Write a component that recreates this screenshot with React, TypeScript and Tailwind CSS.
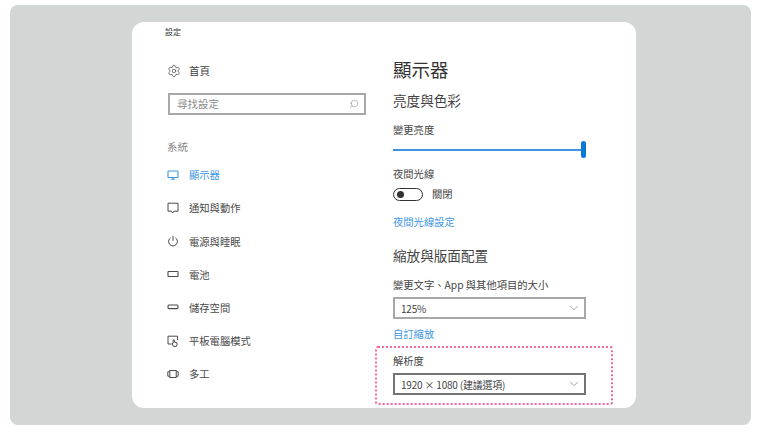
import React from 'react'
import { Settings, Search, ChevronDown } from 'lucide-react'

const FONT = "font-['Noto_Sans_CJK_TC','Noto_Sans',sans-serif]"

function MonitorIcon() {
  return (
    <svg width="12" height="12" viewBox="0 0 12 12" fill="none" stroke="currentColor" strokeWidth="1.1">
      <rect x="1" y="2" width="10" height="6.5" rx="0.6" />
      <path d="M4 10.2h4M6 8.5v1.7" />
    </svg>
  )
}

function NoteIcon() {
  return (
    <svg width="12" height="12" viewBox="0 0 12 12" fill="none" stroke="currentColor" strokeWidth="1">
      <path d="M1 1.2h10v8H7L5.6 11 4.4 9.2H1z" />
    </svg>
  )
}

function PowerIcon() {
  return (
    <svg width="12" height="12" viewBox="0 0 12 12" fill="none" stroke="currentColor" strokeWidth="1">
      <path d="M6 .8v5M3.6 2.8a4.4 4.4 0 1 0 4.8 0" />
    </svg>
  )
}

function BatteryIcon() {
  return (
    <svg width="12" height="12" viewBox="0 0 12 12" fill="none" stroke="currentColor" strokeWidth="1.1">
      <rect x="1" y="3.5" width="10" height="5" rx="0.5" />
    </svg>
  )
}

function StorageIcon() {
  return (
    <svg width="12" height="12" viewBox="0 0 12 12" fill="none" stroke="currentColor" strokeWidth="1.1">
      <rect x="1" y="4" width="10" height="3.6" rx="1" />
    </svg>
  )
}

function TabletIcon() {
  return (
    <svg width="12" height="12" viewBox="0 0 12 12" fill="none" stroke="currentColor" strokeWidth="1">
      <path d="M4.5 9H1V1.2h9.6v4" />
      <path d="M6.4 11.4 5 8.6l1.2-.4V5.4a.7.7 0 0 1 1.4 0v1.8l2.4.6v2l-.6 1.6z" />
    </svg>
  )
}

function MultitaskIcon() {
  return (
    <svg width="12" height="12" viewBox="0 0 12 12" fill="none" stroke="currentColor" strokeWidth="1">
      <rect x="2.8" y="2.5" width="6.4" height="7" />
      <path d="M2.8 3.8H.8v4.4h2M9.2 3.8h2v4.4h-2" />
    </svg>
  )
}

const NAV = [
  { label: '顯示器', icon: <MonitorIcon />, active: true },
  { label: '通知與動作', icon: <NoteIcon /> },
  { label: '電源與睡眠', icon: <PowerIcon /> },
  { label: '電池', icon: <BatteryIcon /> },
  { label: '儲存空間', icon: <StorageIcon /> },
  { label: '平板電腦模式', icon: <TabletIcon /> },
  { label: '多工', icon: <MultitaskIcon /> },
]

function Dropdown({ value, dark }: { value: string; dark?: boolean }) {
  return (
    <div
      className={`mt-[4px] w-[193px] h-[22px] flex items-center justify-between pl-[6px] pr-[3px] border-2 ${
        dark ? 'border-[#757575]' : 'border-[#a8a8a8]'
      }`}
    >
      <span className="text-[10px] tracking-[-0.2px] text-[#444]">{value}</span>
      <ChevronDown size={14} strokeWidth={1} className="text-[#666]" />
    </div>
  )
}

export default function App() {
  return (
    <div className={`w-[760px] h-[432px] bg-white pt-[5px] pl-[10px] ${FONT}`}>
      <div className="w-[741px] h-[420px] bg-[#d2d6d4] rounded-[8px] pt-[17px] pl-[122px]">
        <div className="w-[504px] h-[386px] bg-white rounded-[12px] flex pl-[36px]">
          {/* Left nav */}
          <div className="w-[198px] flex flex-col">
            <div className="h-[20px] flex items-center -ml-[3px] text-[8px] text-[#333]">設定</div>
            <div className="mt-[17px] h-[24px] flex items-center -ml-[1px] text-[#444]">
              <Settings size={14} strokeWidth={1.2} />
              <span className="ml-[8px] text-[10.5px] text-[#444]">首頁</span>
            </div>
            <div className="mt-[10px] h-[22px] border-2 border-[#a8a8a8] flex items-center justify-between pl-[7px] pr-[5px]">
              <span className="text-[10.5px] text-[#8a8a8a]">尋找設定</span>
              <Search size={10} strokeWidth={1} className="text-[#666] -scale-x-100" />
            </div>
            <div className="mt-[24px] h-[16px] flex items-center -ml-[1px] text-[10.5px] text-[#888]">系統</div>
            <div className="mt-[3.5px] flex flex-col">
              {NAV.map((item) => (
                <div
                  key={item.label}
                  className={`h-[33.1px] flex items-center -ml-[1px] ${item.active ? 'text-[#3d97e3]' : 'text-[#4a4a4a]'}`}
                >
                  {item.icon}
                  <span className="ml-[10px] text-[10.3px]">{item.label}</span>
                </div>
              ))}
            </div>
          </div>

          {/* Right content */}
          <div className="ml-[27px] flex flex-col pt-[34px] text-[#444]">
            <div className="h-[28px] flex items-center text-[18.5px] text-[#333]">顯示器</div>
            <div className="mt-[6px] h-[20px] flex items-center text-[13.6px]">亮度與色彩</div>
            <div className="mt-[12px] h-[16px] flex items-center text-[10.3px]">變更亮度</div>
            <div className="mt-[3px] w-[193px] h-[17px] flex items-center">
              <div className="w-[188px] h-[2px] bg-[#3d94e0]" />
              <div className="w-[5px] h-[17px] rounded-full bg-[#0b78d4]" />
            </div>
            <div className="mt-[8px] h-[16px] flex items-center text-[10.3px]">夜間光線</div>
            <div className="mt-[4px] h-[16px] flex items-center">
              <div className="w-[30px] h-[13px] rounded-full border-[1.5px] border-[#333] flex items-center pl-[3px]">
                <div className="w-[7px] h-[7px] rounded-full bg-[#333]" />
              </div>
              <span className="ml-[9px] text-[10.3px]">關閉</span>
            </div>
            <div className="mt-[12px] h-[16px] flex items-center text-[10.3px] text-[#3d97e3]">夜間光線設定</div>
            <div className="mt-[15px] h-[20px] flex items-center text-[13.6px]">縮放與版面配置</div>
            <div className="mt-[12px] h-[16px] flex items-center text-[10.3px]">變更文字、App 與其他項目的大小</div>
            <Dropdown value="125%" />
            <div className="mt-[7px] h-[16px] flex items-center text-[10.3px] text-[#3d97e3]">自訂縮放</div>
            {/* Highlighted resolution block */}
            <div className="mt-[4px] -ml-[18px] w-[238px] h-[59px] border-2 border-dotted border-[#f5689f] rounded-[3px] pl-[16px] pt-[5px]">
              <div className="h-[16px] flex items-center text-[10.3px]">解析度</div>
              <Dropdown value="1920 × 1080 (建議選項)" dark />
            </div>
          </div>
        </div>
      </div>
    </div>
  )
}
